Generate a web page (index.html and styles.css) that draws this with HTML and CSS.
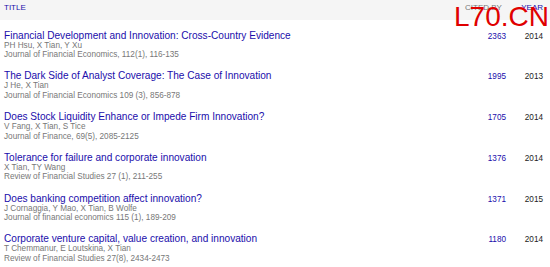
FILE: index.html
```html
<!DOCTYPE html>
<html>
<head>
<meta charset="utf-8">
<link rel="stylesheet" href="styles.css">
</head>
<body>
<div class="table">
  <div class="head">
    <span class="h-title">TITLE</span>
    <span class="h-cited">CITED BY</span>
    <span class="h-year">YEAR</span>
  </div>
  <div class="row">
    <div class="main">
      <div class="title">Financial Development and Innovation: Cross-Country Evidence</div>
      <div class="meta">PH Hsu, X Tian, Y Xu</div>
      <div class="meta">Journal of Financial Economics, 112(1), 116-135</div>
    </div>
    <div class="cited">2363</div>
    <div class="year">2014</div>
  </div>
  <div class="row">
    <div class="main">
      <div class="title">The Dark Side of Analyst Coverage: The Case of Innovation</div>
      <div class="meta">J He, X Tian</div>
      <div class="meta">Journal of Financial Economics 109 (3), 856-878</div>
    </div>
    <div class="cited">1995</div>
    <div class="year">2013</div>
  </div>
  <div class="row">
    <div class="main">
      <div class="title">Does Stock Liquidity Enhance or Impede Firm Innovation?</div>
      <div class="meta">V Fang, X Tian, S Tice</div>
      <div class="meta">Journal of Finance, 69(5), 2085-2125</div>
    </div>
    <div class="cited">1705</div>
    <div class="year">2014</div>
  </div>
  <div class="row">
    <div class="main">
      <div class="title">Tolerance for failure and corporate innovation</div>
      <div class="meta">X Tian, TY Wang</div>
      <div class="meta">Review of Financial Studies 27 (1), 211-255</div>
    </div>
    <div class="cited">1376</div>
    <div class="year">2014</div>
  </div>
  <div class="row">
    <div class="main">
      <div class="title">Does banking competition affect innovation?</div>
      <div class="meta">J Cornaggia, Y Mao, X Tian, B Wolfe</div>
      <div class="meta">Journal of financial economics 115 (1), 189-209</div>
    </div>
    <div class="cited">1371</div>
    <div class="year">2015</div>
  </div>
  <div class="row">
    <div class="main">
      <div class="title">Corporate venture capital, value creation, and innovation</div>
      <div class="meta">T Chemmanur, E Loutskina, X Tian</div>
      <div class="meta">Review of Financial Studies 27(8), 2434-2473</div>
    </div>
    <div class="cited">1180</div>
    <div class="year">2014</div>
  </div>
</div>
<div class="watermark">L70.CN</div>
</body>
</html>
```
FILE: styles.css
```css
html, body {
  margin: 0;
  padding: 0;
  background: #fff;
  font-family: "Liberation Sans", Arial, sans-serif;
}
.table {
  width: 550px;
}
.head {
  display: flex;
  align-items: center;
  height: 20px;
  background: #f5f5f5;
  font-size: 8px;
  padding: 0 7px 0 4px;
  box-sizing: border-box;
}
.h-title {
  flex: 1;
  color: #1a0dab;
  margin-top: -5px;
}
.h-cited {
  color: #777;
  width: 41px;
  margin-top: -5px;
}
.h-year {
  color: #1a0dab;
  width: 37px;
  text-align: right;
  margin-top: -5px;
}
.row {
  display: flex;
  align-items: baseline;
  padding: 9.5px 7px 1.3px 4px;
  box-sizing: border-box;
}
.main {
  flex: 1;
}
.title {
  font-size: 10.1px;
  line-height: 11px;
  color: #1a0dab;
}
.meta {
  font-size: 8.2px;
  line-height: 9.5px;
  color: #777;
}
.cited {
  width: 40px;
  text-align: right;
  font-size: 8.2px;
  color: #1a0dab;
}
.year {
  width: 37px;
  text-align: right;
  font-size: 8.2px;
  color: #222;
}
.watermark {
  position: absolute;
  left: 454px;
  top: 0px;
  font-size: 28px;
  line-height: 33px;
  color: #e00000;
  font-family: "Liberation Sans", Arial, sans-serif;
}
```
